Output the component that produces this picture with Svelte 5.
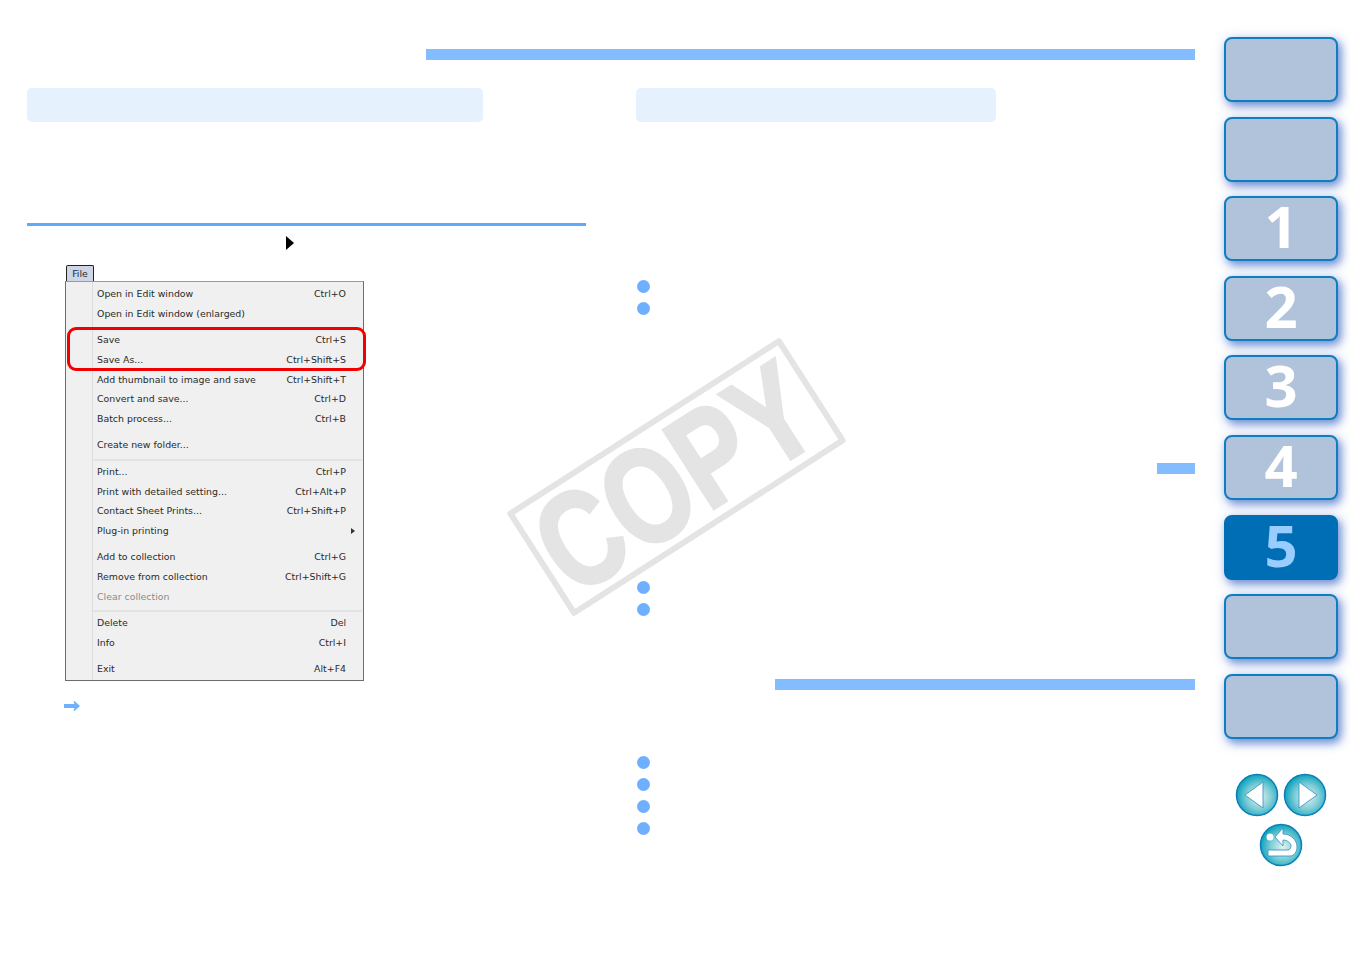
<script lang="ts">
	const groups = [
		[{ label: 'Open in Edit window', key: 'Ctrl+O' }, { label: 'Open in Edit window (enlarged)', key: '' }],
		[
			{ label: 'Save', key: 'Ctrl+S' },
			{ label: 'Save As...', key: 'Ctrl+Shift+S' },
			{ label: 'Add thumbnail to image and save', key: 'Ctrl+Shift+T' },
			{ label: 'Convert and save...', key: 'Ctrl+D' },
			{ label: 'Batch process...', key: 'Ctrl+B' }
		],
		[{ label: 'Create new folder...', key: '' }],
		[
			{ label: 'Print...', key: 'Ctrl+P' },
			{ label: 'Print with detailed setting...', key: 'Ctrl+Alt+P' },
			{ label: 'Contact Sheet Prints...', key: 'Ctrl+Shift+P' },
			{ label: 'Plug-in printing', key: '', sub: true }
		],
		[
			{ label: 'Add to collection', key: 'Ctrl+G' },
			{ label: 'Remove from collection', key: 'Ctrl+Shift+G' },
			{ label: 'Clear collection', key: '', off: true }
		],
		[{ label: 'Delete', key: 'Del' }, { label: 'Info', key: 'Ctrl+I' }],
		[{ label: 'Exit', key: 'Alt+F4' }]
	];
	// separators that actually show a line
	const ruled = [0, 2, 4];
	const tabs = ['', '', '1', '2', '3', '4', '5', '', ''];
	const active = '5';
</script>

<div class="page">
	<main class="main">
		<div class="bar top"></div>
		<div class="columns">
			<section class="left">
				<div class="panel wide"></div>
				<div class="rule"></div>
				<div class="crumb"><span class="tri"></span></div>
				<div class="shot">
					<div class="tab">File</div>
					<div class="menu">
						{#each groups as g, i}
							<div class="group">
								{#each g as item}
									<div class="row" class:off={item.off}>
										<span>{item.label}</span>
										<span>{item.key}</span>
										{#if item.sub}<span class="sub"></span>{/if}
									</div>
								{/each}
							</div>
							{#if i < groups.length - 1}
								<div class="sep" class:line={ruled.includes(i)}></div>
							{/if}
						{/each}
						<div class="mark"></div>
					</div>
				</div>
				<svg class="arrow" width="16" height="10" viewBox="0 0 16 10">
					<path d="M0 3h10.500L9.500 0.500 10.500 0 16 5l-5.500 5-1-0.500L10.500 7H0z" fill="#6fb2fb" />
				</svg>
			</section>

			<section class="right">
				<div class="panel narrow"></div>
				<div class="dots first"><i></i><i></i></div>
				<div class="dots second"><i></i><i></i></div>
				<div class="bar wide-bar"></div>
				<div class="dots third"><i></i><i></i><i></i><i></i></div>
			</section>
		</div>
		<div class="bar tiny"></div>
		<div class="stamp"><span>COPY</span></div>
	</main>

	<aside class="side">
		{#each tabs as t}
			<div class="tile" class:on={t === active}>{t}</div>
		{/each}
		<div class="nav">
			<svg width="44" height="44" viewBox="0 0 44 44">
				<defs>
					<radialGradient id="disc" cx="0.55" cy="0.55" r="0.55">
						<stop offset="0" stop-color="#e2f3f3" />
						<stop offset="0.55" stop-color="#7fcdd6" />
						<stop offset="1" stop-color="#0ea3bd" />
					</radialGradient>
				</defs>
				<circle cx="22" cy="22" r="20.500" fill="url(#disc)" stroke="#0a7fbb" stroke-width="1.500" />
				<path d="M10 22 28 9V35z" fill="#fff" stroke="#2a8fc4" stroke-width="0.800" />
			</svg>
			<svg width="44" height="44" viewBox="0 0 44 44">
				<circle cx="22" cy="22" r="20.500" fill="url(#disc)" stroke="#0a7fbb" stroke-width="1.500" />
				<path d="M16 9 34 22 16 35z" fill="#fff" stroke="#2a8fc4" stroke-width="0.800" />
			</svg>
			<svg class="home" width="44" height="44" viewBox="0 0 44 44">
				<circle cx="22" cy="22" r="20.500" fill="url(#disc)" stroke="#0a7fbb" stroke-width="1.500" />
				<circle cx="11" cy="14" r="3.500" fill="#fff" />
				<path d="M16 14 24 5V11C32 11 38 17 38 24 38 29 35 33 31 33H9V27H28C31 27 32 25 32 23 32 20 28 17 24 17V23z" fill="#fff" stroke="#2a8fc4" stroke-width="0.800" />
			</svg>
		</div>
	</aside>
</div>

<style>
	:global(body) { margin: 0; background: #fff; }
	.page { display: flex; height: 954px; overflow: hidden; }
	.main { position: relative; width: 1195px; padding-top: 49px; box-sizing: border-box; }
	.bar { height: 11px; background: #84bdff; }
	.top { margin-left: 426px; }
	.columns { display: grid; grid-template-columns: 636px 1fr; margin-top: 28px; }
	.left { padding-left: 27px; }
	.panel { height: 34px; background: #e5f1fd; border-radius: 5px; }
	.wide { width: 455.500px; }
	.narrow { width: 360px; }
	.rule { width: 559px; height: 3px; margin-top: 101px; background: #5ea9fb; }
	.crumb { height: 15px; margin-top: 10px; padding-left: 259px; }
	.tri { display: block; width: 0; height: 0; border-left: 8px solid #000; border-top: 7.500px solid transparent; border-bottom: 7.500px solid transparent; }

	.shot { margin: 14px 0 0 38px; width: 299px; font: 9.400px "DejaVu Sans", sans-serif; color: #2a2a2a; }
	.tab { width: 28px; height: 16px; margin-left: 1px; box-sizing: border-box; border: 1px solid #222; border-bottom: 0; border-radius: 2px 2px 0 0; background: #cdd5e6; text-align: center; line-height: 16px; }
	.menu { position: relative; box-sizing: border-box; height: 400px; padding: 2.300px 17px 0 31px; background: #f0f0f0; border: 1px solid #6d6d6d; border-top-color: #9a9a9a; }
	.menu::before { content: ''; position: absolute; left: 26px; top: 0; bottom: 0; border-left: 1px solid #dcdcdc; }
	.row { position: relative; display: flex; justify-content: space-between; height: 19.700px; line-height: 19.700px; white-space: nowrap; }
	.off { color: #8b8b8b; }
	.sub { position: absolute; right: -9px; top: 7px; border-left: 4px solid #333; border-top: 3px solid transparent; border-bottom: 3px solid transparent; }
	.sep { height: 6.700px; margin-left: -4px; margin-right: -16px; }
	.sep.line { background: linear-gradient(#e3e3e3, #e3e3e3) 0 3.500px / 100% 2px no-repeat; }
	.mark { position: absolute; left: 1px; top: 45px; width: 299px; height: 44px; box-sizing: border-box; border: 3px solid #f00000; border-radius: 9px; }
	.arrow { display: block; margin: 20px 0 0 37px; }

	.first { margin-top: 157.500px; }
	.second { margin-top: 266px; }
	.wide-bar { margin: 62.500px 0 0 139px; }
	.third { margin-top: 66px; }
	.dots { display: flex; flex-direction: column; gap: 9.300px; padding-left: 0.500px; }
	.dots i { display: block; width: 13px; height: 13px; border-radius: 50%; background: #6eb0ff; }
	.tiny { position: absolute; right: 0; top: 463px; width: 38px; }

	.stamp { position: absolute; left: 513.500px; top: 415px; width: 325px; height: 124px; box-sizing: border-box; border: 6.500px solid #e4e4e4; border-radius: 3px; transform: rotate(-32.700deg); display: flex; align-items: center; justify-content: center; }
	.stamp span { font: bold 136px/1 "Liberation Sans", sans-serif; color: #e4e4e4; -webkit-text-stroke: 3px #e4e4e4; transform: translateX(-2px) scaleX(0.78); white-space: nowrap; }

	.side { display: flex; flex-direction: column; gap: 14.600px; padding: 37px 0 0 29px; }
	.tile { width: 114px; height: 65px; box-sizing: border-box; border: 2px solid #0f7dc2; border-radius: 8px; background: #b1c3da; box-shadow: 3px 4px 8px rgba(40, 90, 190, 0.6), 2px 3px 14px rgba(60, 100, 200, 0.25); color: #fff; font: bold 58px/55px "Open Sans", sans-serif; text-align: center; }
	.tile.on { background: #006eb4; color: #99ccff; border-color: #006eb4; }
	.nav { display: flex; flex-wrap: wrap; justify-content: center; gap: 7px 4px; width: 104px; margin: 20px 0 0 5px; }
	.home { margin-top: -1px; }
</style>
